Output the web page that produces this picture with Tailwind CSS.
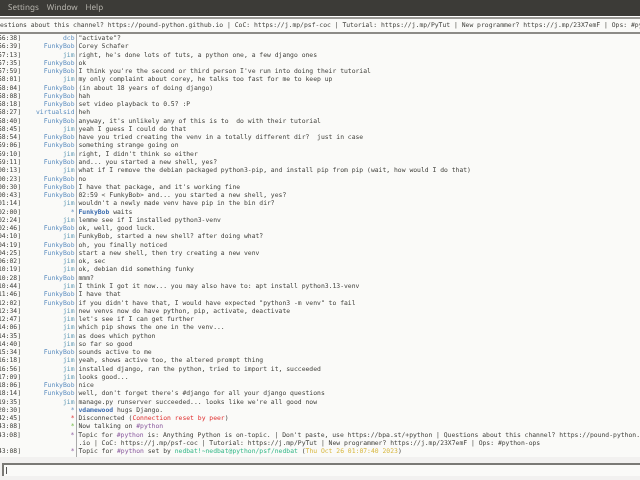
<!DOCTYPE html>
<html>
<head>
<meta charset="utf-8">
<script src="https://cdn.jsdelivr.net/npm/@tailwindcss/browser@4"></script>
</head>
<body class="m-0 w-[640px] h-[480px] overflow-hidden bg-[#f2f1f0] font-['DejaVu_Sans_Mono',monospace] text-[6.4px] leading-[8.27px] text-[#44443f] [text-rendering:geometricPrecision]">
<div class="flex flex-col h-[480px] w-[640px] blur-[0.25px]">
  <nav class="h-[16px] shrink-0 bg-[#3c3b37] flex items-center gap-[8px] pl-[8px] font-['Noto_Sans',sans-serif] text-[8.1px] text-[#b3b1aa]">
    <span>Settings</span><span>Window</span><span>Help</span>
  </nav>
  <div class="h-[18px] shrink-0 bg-[#fafaf8] border-t border-white">
    <div class="h-[17px] border-y-2 border-t-[#9a9995] border-b-[#8c8b87] pb-[1px] flex items-center whitespace-pre overflow-hidden">estions about this channel? https://pound-python.github.io | CoC: https://j.mp/psf-coc | Tutorial: https://j.mp/PyTut | New programmer? https://j.mp/23X7emF | Ops: #python-ops</div>
  </div>
  <main class="h-[423px] shrink-0 bg-[#fafaf8] overflow-hidden">
    <div class="flex h-[8.27px] whitespace-pre"><span class="w-[21px] flex justify-end overflow-hidden">56:38]</span><span class="w-[53.5px] text-right text-[#5e8fc0]">dcb</span><span class="ml-[1.5px] pl-[1.5px] border-l border-[#a9a9a9]">"activate"?</span></div>
    <div class="flex h-[8.27px] whitespace-pre"><span class="w-[21px] flex justify-end overflow-hidden">56:39]</span><span class="w-[53.5px] text-right text-[#5e8fc0]">FunkyBob</span><span class="ml-[1.5px] pl-[1.5px] border-l border-[#a9a9a9]">Corey Schafer</span></div>
    <div class="flex h-[8.27px] whitespace-pre"><span class="w-[21px] flex justify-end overflow-hidden">57:13]</span><span class="w-[53.5px] text-right text-[#5f98b4]">jim</span><span class="ml-[1.5px] pl-[1.5px] border-l border-[#a9a9a9]">right, he's done lots of tuts, a python one, a few django ones</span></div>
    <div class="flex h-[8.27px] whitespace-pre"><span class="w-[21px] flex justify-end overflow-hidden">57:35]</span><span class="w-[53.5px] text-right text-[#5e8fc0]">FunkyBob</span><span class="ml-[1.5px] pl-[1.5px] border-l border-[#a9a9a9]">ok</span></div>
    <div class="flex h-[8.27px] whitespace-pre"><span class="w-[21px] flex justify-end overflow-hidden">57:59]</span><span class="w-[53.5px] text-right text-[#5e8fc0]">FunkyBob</span><span class="ml-[1.5px] pl-[1.5px] border-l border-[#a9a9a9]">I think you're the second or third person I've run into doing their tutorial</span></div>
    <div class="flex h-[8.27px] whitespace-pre"><span class="w-[21px] flex justify-end overflow-hidden">58:01]</span><span class="w-[53.5px] text-right text-[#5f98b4]">jim</span><span class="ml-[1.5px] pl-[1.5px] border-l border-[#a9a9a9]">my only complaint about corey, he talks too fast for me to keep up</span></div>
    <div class="flex h-[8.27px] whitespace-pre"><span class="w-[21px] flex justify-end overflow-hidden">58:04]</span><span class="w-[53.5px] text-right text-[#5e8fc0]">FunkyBob</span><span class="ml-[1.5px] pl-[1.5px] border-l border-[#a9a9a9]">(in about 18 years of doing django)</span></div>
    <div class="flex h-[8.27px] whitespace-pre"><span class="w-[21px] flex justify-end overflow-hidden">58:08]</span><span class="w-[53.5px] text-right text-[#5e8fc0]">FunkyBob</span><span class="ml-[1.5px] pl-[1.5px] border-l border-[#a9a9a9]">hah</span></div>
    <div class="flex h-[8.27px] whitespace-pre"><span class="w-[21px] flex justify-end overflow-hidden">58:18]</span><span class="w-[53.5px] text-right text-[#5e8fc0]">FunkyBob</span><span class="ml-[1.5px] pl-[1.5px] border-l border-[#a9a9a9]">set video playback to 0.5? :P</span></div>
    <div class="flex h-[8.27px] whitespace-pre"><span class="w-[21px] flex justify-end overflow-hidden">58:27]</span><span class="w-[53.5px] text-right text-[#5e8fc0]">virtualsid</span><span class="ml-[1.5px] pl-[1.5px] border-l border-[#a9a9a9]">heh</span></div>
    <div class="flex h-[8.27px] whitespace-pre"><span class="w-[21px] flex justify-end overflow-hidden">58:40]</span><span class="w-[53.5px] text-right text-[#5e8fc0]">FunkyBob</span><span class="ml-[1.5px] pl-[1.5px] border-l border-[#a9a9a9]">anyway, it's unlikely any of this is to  do with their tutorial</span></div>
    <div class="flex h-[8.27px] whitespace-pre"><span class="w-[21px] flex justify-end overflow-hidden">58:45]</span><span class="w-[53.5px] text-right text-[#5f98b4]">jim</span><span class="ml-[1.5px] pl-[1.5px] border-l border-[#a9a9a9]">yeah I guess I could do that</span></div>
    <div class="flex h-[8.27px] whitespace-pre"><span class="w-[21px] flex justify-end overflow-hidden">58:54]</span><span class="w-[53.5px] text-right text-[#5e8fc0]">FunkyBob</span><span class="ml-[1.5px] pl-[1.5px] border-l border-[#a9a9a9]">have you tried creating the venv in a totally different dir?  just in case</span></div>
    <div class="flex h-[8.27px] whitespace-pre"><span class="w-[21px] flex justify-end overflow-hidden">59:06]</span><span class="w-[53.5px] text-right text-[#5e8fc0]">FunkyBob</span><span class="ml-[1.5px] pl-[1.5px] border-l border-[#a9a9a9]">something strange going on</span></div>
    <div class="flex h-[8.27px] whitespace-pre"><span class="w-[21px] flex justify-end overflow-hidden">59:10]</span><span class="w-[53.5px] text-right text-[#5f98b4]">jim</span><span class="ml-[1.5px] pl-[1.5px] border-l border-[#a9a9a9]">right, I didn't think so either</span></div>
    <div class="flex h-[8.27px] whitespace-pre"><span class="w-[21px] flex justify-end overflow-hidden">59:11]</span><span class="w-[53.5px] text-right text-[#5e8fc0]">FunkyBob</span><span class="ml-[1.5px] pl-[1.5px] border-l border-[#a9a9a9]">and... you started a new shell, yes?</span></div>
    <div class="flex h-[8.27px] whitespace-pre"><span class="w-[21px] flex justify-end overflow-hidden">00:13]</span><span class="w-[53.5px] text-right text-[#5f98b4]">jim</span><span class="ml-[1.5px] pl-[1.5px] border-l border-[#a9a9a9]">what if I remove the debian packaged python3-pip, and install pip from pip (wait, how would I do that)</span></div>
    <div class="flex h-[8.27px] whitespace-pre"><span class="w-[21px] flex justify-end overflow-hidden">00:23]</span><span class="w-[53.5px] text-right text-[#5e8fc0]">FunkyBob</span><span class="ml-[1.5px] pl-[1.5px] border-l border-[#a9a9a9]">no</span></div>
    <div class="flex h-[8.27px] whitespace-pre"><span class="w-[21px] flex justify-end overflow-hidden">00:30]</span><span class="w-[53.5px] text-right text-[#5e8fc0]">FunkyBob</span><span class="ml-[1.5px] pl-[1.5px] border-l border-[#a9a9a9]">I have that package, and it's working fine</span></div>
    <div class="flex h-[8.27px] whitespace-pre"><span class="w-[21px] flex justify-end overflow-hidden">00:43]</span><span class="w-[53.5px] text-right text-[#5e8fc0]">FunkyBob</span><span class="ml-[1.5px] pl-[1.5px] border-l border-[#a9a9a9]">02:59 &lt; FunkyBob&gt; and... you started a new shell, yes?</span></div>
    <div class="flex h-[8.27px] whitespace-pre"><span class="w-[21px] flex justify-end overflow-hidden">01:14]</span><span class="w-[53.5px] text-right text-[#5f98b4]">jim</span><span class="ml-[1.5px] pl-[1.5px] border-l border-[#a9a9a9]">wouldn't a newly made venv have pip in the bin dir?</span></div>
    <div class="flex h-[8.27px] whitespace-pre"><span class="w-[21px] flex justify-end overflow-hidden">02:00]</span><span class="w-[53.5px] text-right text-[#5e8fc0]">*</span><span class="ml-[1.5px] pl-[1.5px] border-l border-[#a9a9a9]"><b class="text-[#3f6fb0]">FunkyBob</b> waits</span></div>
    <div class="flex h-[8.27px] whitespace-pre"><span class="w-[21px] flex justify-end overflow-hidden">02:24]</span><span class="w-[53.5px] text-right text-[#5f98b4]">jim</span><span class="ml-[1.5px] pl-[1.5px] border-l border-[#a9a9a9]">lemme see if I installed python3-venv</span></div>
    <div class="flex h-[8.27px] whitespace-pre"><span class="w-[21px] flex justify-end overflow-hidden">02:46]</span><span class="w-[53.5px] text-right text-[#5e8fc0]">FunkyBob</span><span class="ml-[1.5px] pl-[1.5px] border-l border-[#a9a9a9]">ok, well, good luck.</span></div>
    <div class="flex h-[8.27px] whitespace-pre"><span class="w-[21px] flex justify-end overflow-hidden">04:10]</span><span class="w-[53.5px] text-right text-[#5f98b4]">jim</span><span class="ml-[1.5px] pl-[1.5px] border-l border-[#a9a9a9]">FunkyBob, started a new shell? after doing what?</span></div>
    <div class="flex h-[8.27px] whitespace-pre"><span class="w-[21px] flex justify-end overflow-hidden">04:19]</span><span class="w-[53.5px] text-right text-[#5e8fc0]">FunkyBob</span><span class="ml-[1.5px] pl-[1.5px] border-l border-[#a9a9a9]">oh, you finally noticed</span></div>
    <div class="flex h-[8.27px] whitespace-pre"><span class="w-[21px] flex justify-end overflow-hidden">04:25]</span><span class="w-[53.5px] text-right text-[#5e8fc0]">FunkyBob</span><span class="ml-[1.5px] pl-[1.5px] border-l border-[#a9a9a9]">start a new shell, then try creating a new venv</span></div>
    <div class="flex h-[8.27px] whitespace-pre"><span class="w-[21px] flex justify-end overflow-hidden">06:02]</span><span class="w-[53.5px] text-right text-[#5f98b4]">jim</span><span class="ml-[1.5px] pl-[1.5px] border-l border-[#a9a9a9]">ok, sec</span></div>
    <div class="flex h-[8.27px] whitespace-pre"><span class="w-[21px] flex justify-end overflow-hidden">10:19]</span><span class="w-[53.5px] text-right text-[#5f98b4]">jim</span><span class="ml-[1.5px] pl-[1.5px] border-l border-[#a9a9a9]">ok, debian did something funky</span></div>
    <div class="flex h-[8.27px] whitespace-pre"><span class="w-[21px] flex justify-end overflow-hidden">10:28]</span><span class="w-[53.5px] text-right text-[#5e8fc0]">FunkyBob</span><span class="ml-[1.5px] pl-[1.5px] border-l border-[#a9a9a9]">mmm?</span></div>
    <div class="flex h-[8.27px] whitespace-pre"><span class="w-[21px] flex justify-end overflow-hidden">10:44]</span><span class="w-[53.5px] text-right text-[#5f98b4]">jim</span><span class="ml-[1.5px] pl-[1.5px] border-l border-[#a9a9a9]">I think I got it now... you may also have to: apt install python3.13-venv</span></div>
    <div class="flex h-[8.27px] whitespace-pre"><span class="w-[21px] flex justify-end overflow-hidden">11:46]</span><span class="w-[53.5px] text-right text-[#5e8fc0]">FunkyBob</span><span class="ml-[1.5px] pl-[1.5px] border-l border-[#a9a9a9]">I have that</span></div>
    <div class="flex h-[8.27px] whitespace-pre"><span class="w-[21px] flex justify-end overflow-hidden">12:02]</span><span class="w-[53.5px] text-right text-[#5e8fc0]">FunkyBob</span><span class="ml-[1.5px] pl-[1.5px] border-l border-[#a9a9a9]">if you didn't have that, I would have expected "python3 -m venv" to fail</span></div>
    <div class="flex h-[8.27px] whitespace-pre"><span class="w-[21px] flex justify-end overflow-hidden">12:34]</span><span class="w-[53.5px] text-right text-[#5f98b4]">jim</span><span class="ml-[1.5px] pl-[1.5px] border-l border-[#a9a9a9]">new venvs now do have python, pip, activate, deactivate</span></div>
    <div class="flex h-[8.27px] whitespace-pre"><span class="w-[21px] flex justify-end overflow-hidden">12:47]</span><span class="w-[53.5px] text-right text-[#5f98b4]">jim</span><span class="ml-[1.5px] pl-[1.5px] border-l border-[#a9a9a9]">let's see if I can get further</span></div>
    <div class="flex h-[8.27px] whitespace-pre"><span class="w-[21px] flex justify-end overflow-hidden">14:06]</span><span class="w-[53.5px] text-right text-[#5f98b4]">jim</span><span class="ml-[1.5px] pl-[1.5px] border-l border-[#a9a9a9]">which pip shows the one in the venv...</span></div>
    <div class="flex h-[8.27px] whitespace-pre"><span class="w-[21px] flex justify-end overflow-hidden">14:35]</span><span class="w-[53.5px] text-right text-[#5f98b4]">jim</span><span class="ml-[1.5px] pl-[1.5px] border-l border-[#a9a9a9]">as does which python</span></div>
    <div class="flex h-[8.27px] whitespace-pre"><span class="w-[21px] flex justify-end overflow-hidden">14:40]</span><span class="w-[53.5px] text-right text-[#5f98b4]">jim</span><span class="ml-[1.5px] pl-[1.5px] border-l border-[#a9a9a9]">so far so good</span></div>
    <div class="flex h-[8.27px] whitespace-pre"><span class="w-[21px] flex justify-end overflow-hidden">15:34]</span><span class="w-[53.5px] text-right text-[#5e8fc0]">FunkyBob</span><span class="ml-[1.5px] pl-[1.5px] border-l border-[#a9a9a9]">sounds active to me</span></div>
    <div class="flex h-[8.27px] whitespace-pre"><span class="w-[21px] flex justify-end overflow-hidden">16:18]</span><span class="w-[53.5px] text-right text-[#5f98b4]">jim</span><span class="ml-[1.5px] pl-[1.5px] border-l border-[#a9a9a9]">yeah, shows active too, the altered prompt thing</span></div>
    <div class="flex h-[8.27px] whitespace-pre"><span class="w-[21px] flex justify-end overflow-hidden">16:56]</span><span class="w-[53.5px] text-right text-[#5f98b4]">jim</span><span class="ml-[1.5px] pl-[1.5px] border-l border-[#a9a9a9]">installed django, ran the python, tried to import it, succeeded</span></div>
    <div class="flex h-[8.27px] whitespace-pre"><span class="w-[21px] flex justify-end overflow-hidden">17:09]</span><span class="w-[53.5px] text-right text-[#5f98b4]">jim</span><span class="ml-[1.5px] pl-[1.5px] border-l border-[#a9a9a9]">looks good...</span></div>
    <div class="flex h-[8.27px] whitespace-pre"><span class="w-[21px] flex justify-end overflow-hidden">18:06]</span><span class="w-[53.5px] text-right text-[#5e8fc0]">FunkyBob</span><span class="ml-[1.5px] pl-[1.5px] border-l border-[#a9a9a9]">nice</span></div>
    <div class="flex h-[8.27px] whitespace-pre"><span class="w-[21px] flex justify-end overflow-hidden">18:14]</span><span class="w-[53.5px] text-right text-[#5e8fc0]">FunkyBob</span><span class="ml-[1.5px] pl-[1.5px] border-l border-[#a9a9a9]">well, don't forget there's #django for all your django questions</span></div>
    <div class="flex h-[8.27px] whitespace-pre"><span class="w-[21px] flex justify-end overflow-hidden">19:35]</span><span class="w-[53.5px] text-right text-[#5f98b4]">jim</span><span class="ml-[1.5px] pl-[1.5px] border-l border-[#a9a9a9]">manage.py runserver succeeded... looks like we're all good now</span></div>
    <div class="flex h-[8.27px] whitespace-pre"><span class="w-[21px] flex justify-end overflow-hidden">20:30]</span><span class="w-[53.5px] text-right text-[#5e8fc0]">*</span><span class="ml-[1.5px] pl-[1.5px] border-l border-[#a9a9a9]"><b class="text-[#3f6fb0]">vdamewood</b> hugs Django.</span></div>
    <div class="flex h-[8.27px] whitespace-pre"><span class="w-[21px] flex justify-end overflow-hidden">42:45]</span><span class="w-[53.5px] text-right text-[#e03030]">*</span><span class="ml-[1.5px] pl-[1.5px] border-l border-[#a9a9a9]">Disconnected (<span class="text-[#e03030]">Connection reset by peer</span>)</span></div>
    <div class="flex h-[8.27px] whitespace-pre"><span class="w-[21px] flex justify-end overflow-hidden">43:08]</span><span class="w-[53.5px] text-right text-[#6fb840]">*</span><span class="ml-[1.5px] pl-[1.5px] border-l border-[#a9a9a9]">Now talking on <span class="text-[#8a5a9e]">#python</span></span></div>
    <div class="flex h-[8.27px] whitespace-pre"><span class="w-[21px] flex justify-end overflow-hidden">43:08]</span><span class="w-[53.5px] text-right text-[#8a5a9e]">*</span><span class="ml-[1.5px] pl-[1.5px] border-l border-[#a9a9a9]">Topic for <span class="text-[#8a5a9e]">#python</span> is: Anything Python is on-topic. | Don't paste, use https://bpa.st/+python | Questions about this channel? https://pound-python.</span></div>
    <div class="flex h-[8.27px] whitespace-pre"><span class="w-[21px]"></span><span class="w-[53.5px]"></span><span class="ml-[1.5px] pl-[1.5px] border-l border-[#a9a9a9]">.io | CoC: https://j.mp/psf-coc | Tutorial: https://j.mp/PyTut | New programmer? https://j.mp/23X7emF | Ops: #python-ops</span></div>
    <div class="flex h-[9.5px] whitespace-pre"><span class="w-[21px] flex justify-end overflow-hidden">43:08]</span><span class="w-[53.5px] text-right text-[#8a5a9e]">*</span><span class="ml-[1.5px] pl-[1.5px] border-l border-[#a9a9a9]">Topic for <span class="text-[#8a5a9e]">#python</span> set by <span class="text-[#35b889]">nedbat!~nedbat@python/psf/nedbat</span> (<span class="text-[#d8b840]">Thu Oct 26 01:07:40 2023</span>)</span></div>
  </main>
  <div class="flex-1 pl-[2px] pt-[6px]">
    <div class="h-[13px] bg-[#fafaf8] border-t-2 border-l-2 border-[#7a7975] pl-[1.5px] py-[2px]"><div class="w-px h-full bg-[#555]"></div></div>
  </div>
</div>
</body>
</html>
